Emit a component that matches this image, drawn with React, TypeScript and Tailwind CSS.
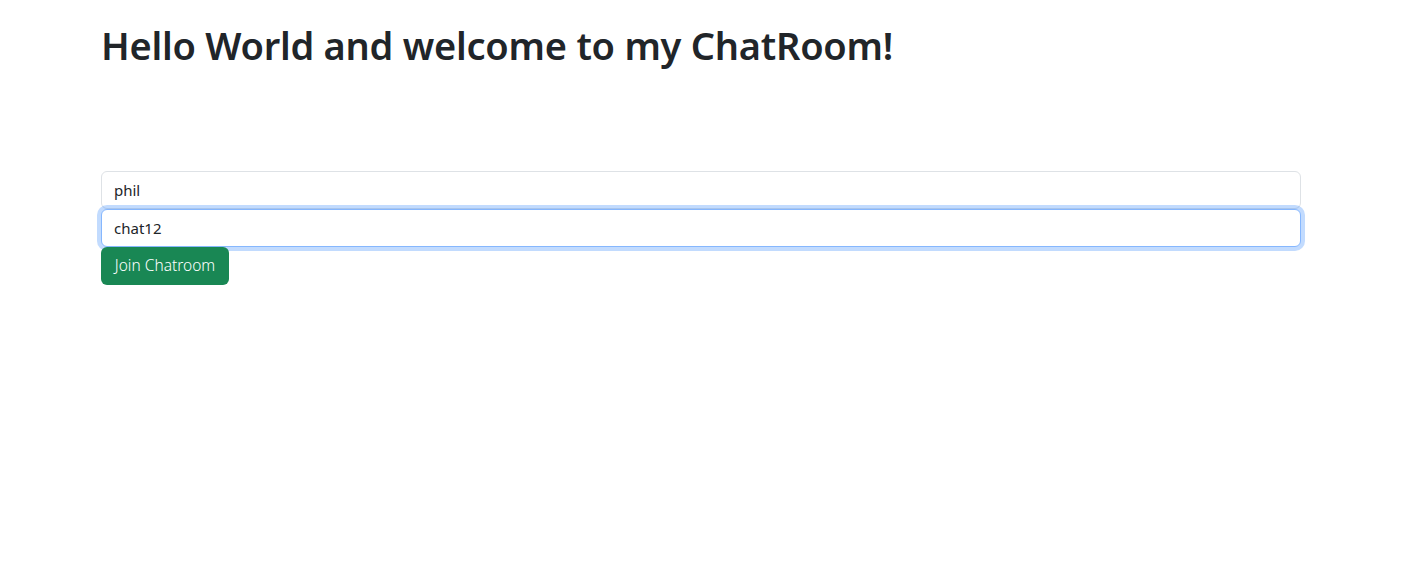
export default function App() {
  return (
    <div className="min-h-screen bg-white text-[#212529] font-['Noto_Sans','Open_Sans',sans-serif]">
      <div className="w-[1200px] ml-[101px] pt-[22px]">
        {/* Heading */}
        <h1 className="text-[38px] leading-[46px] font-semibold tracking-[-0.25px]">
          Hello World and welcome to my ChatRoom!
        </h1>

        {/* Join form */}
        <form className="mt-[103px] flex flex-col" onSubmit={(e) => e.preventDefault()}>
          <input
            defaultValue="phil"
            className="h-[38px] w-full rounded-[6px] border border-[#dee2e6] bg-white px-3 text-[15px] text-[#212529] outline-none"
          />
          <input
            defaultValue="chat12"
            className="h-[38px] w-full rounded-[6px] border border-[#86b7fe] bg-white px-3 text-[15px] text-[#212529] outline-none shadow-[0_0_0_4px_rgba(13,110,253,0.25)]"
          />
          <div>
            <button
              type="submit"
              className="h-[38px] w-[128px] rounded-[6px] bg-[#198754] text-[15.5px] font-light text-white"
            >
              Join Chatroom
            </button>
          </div>
        </form>
      </div>
    </div>
  )
}
